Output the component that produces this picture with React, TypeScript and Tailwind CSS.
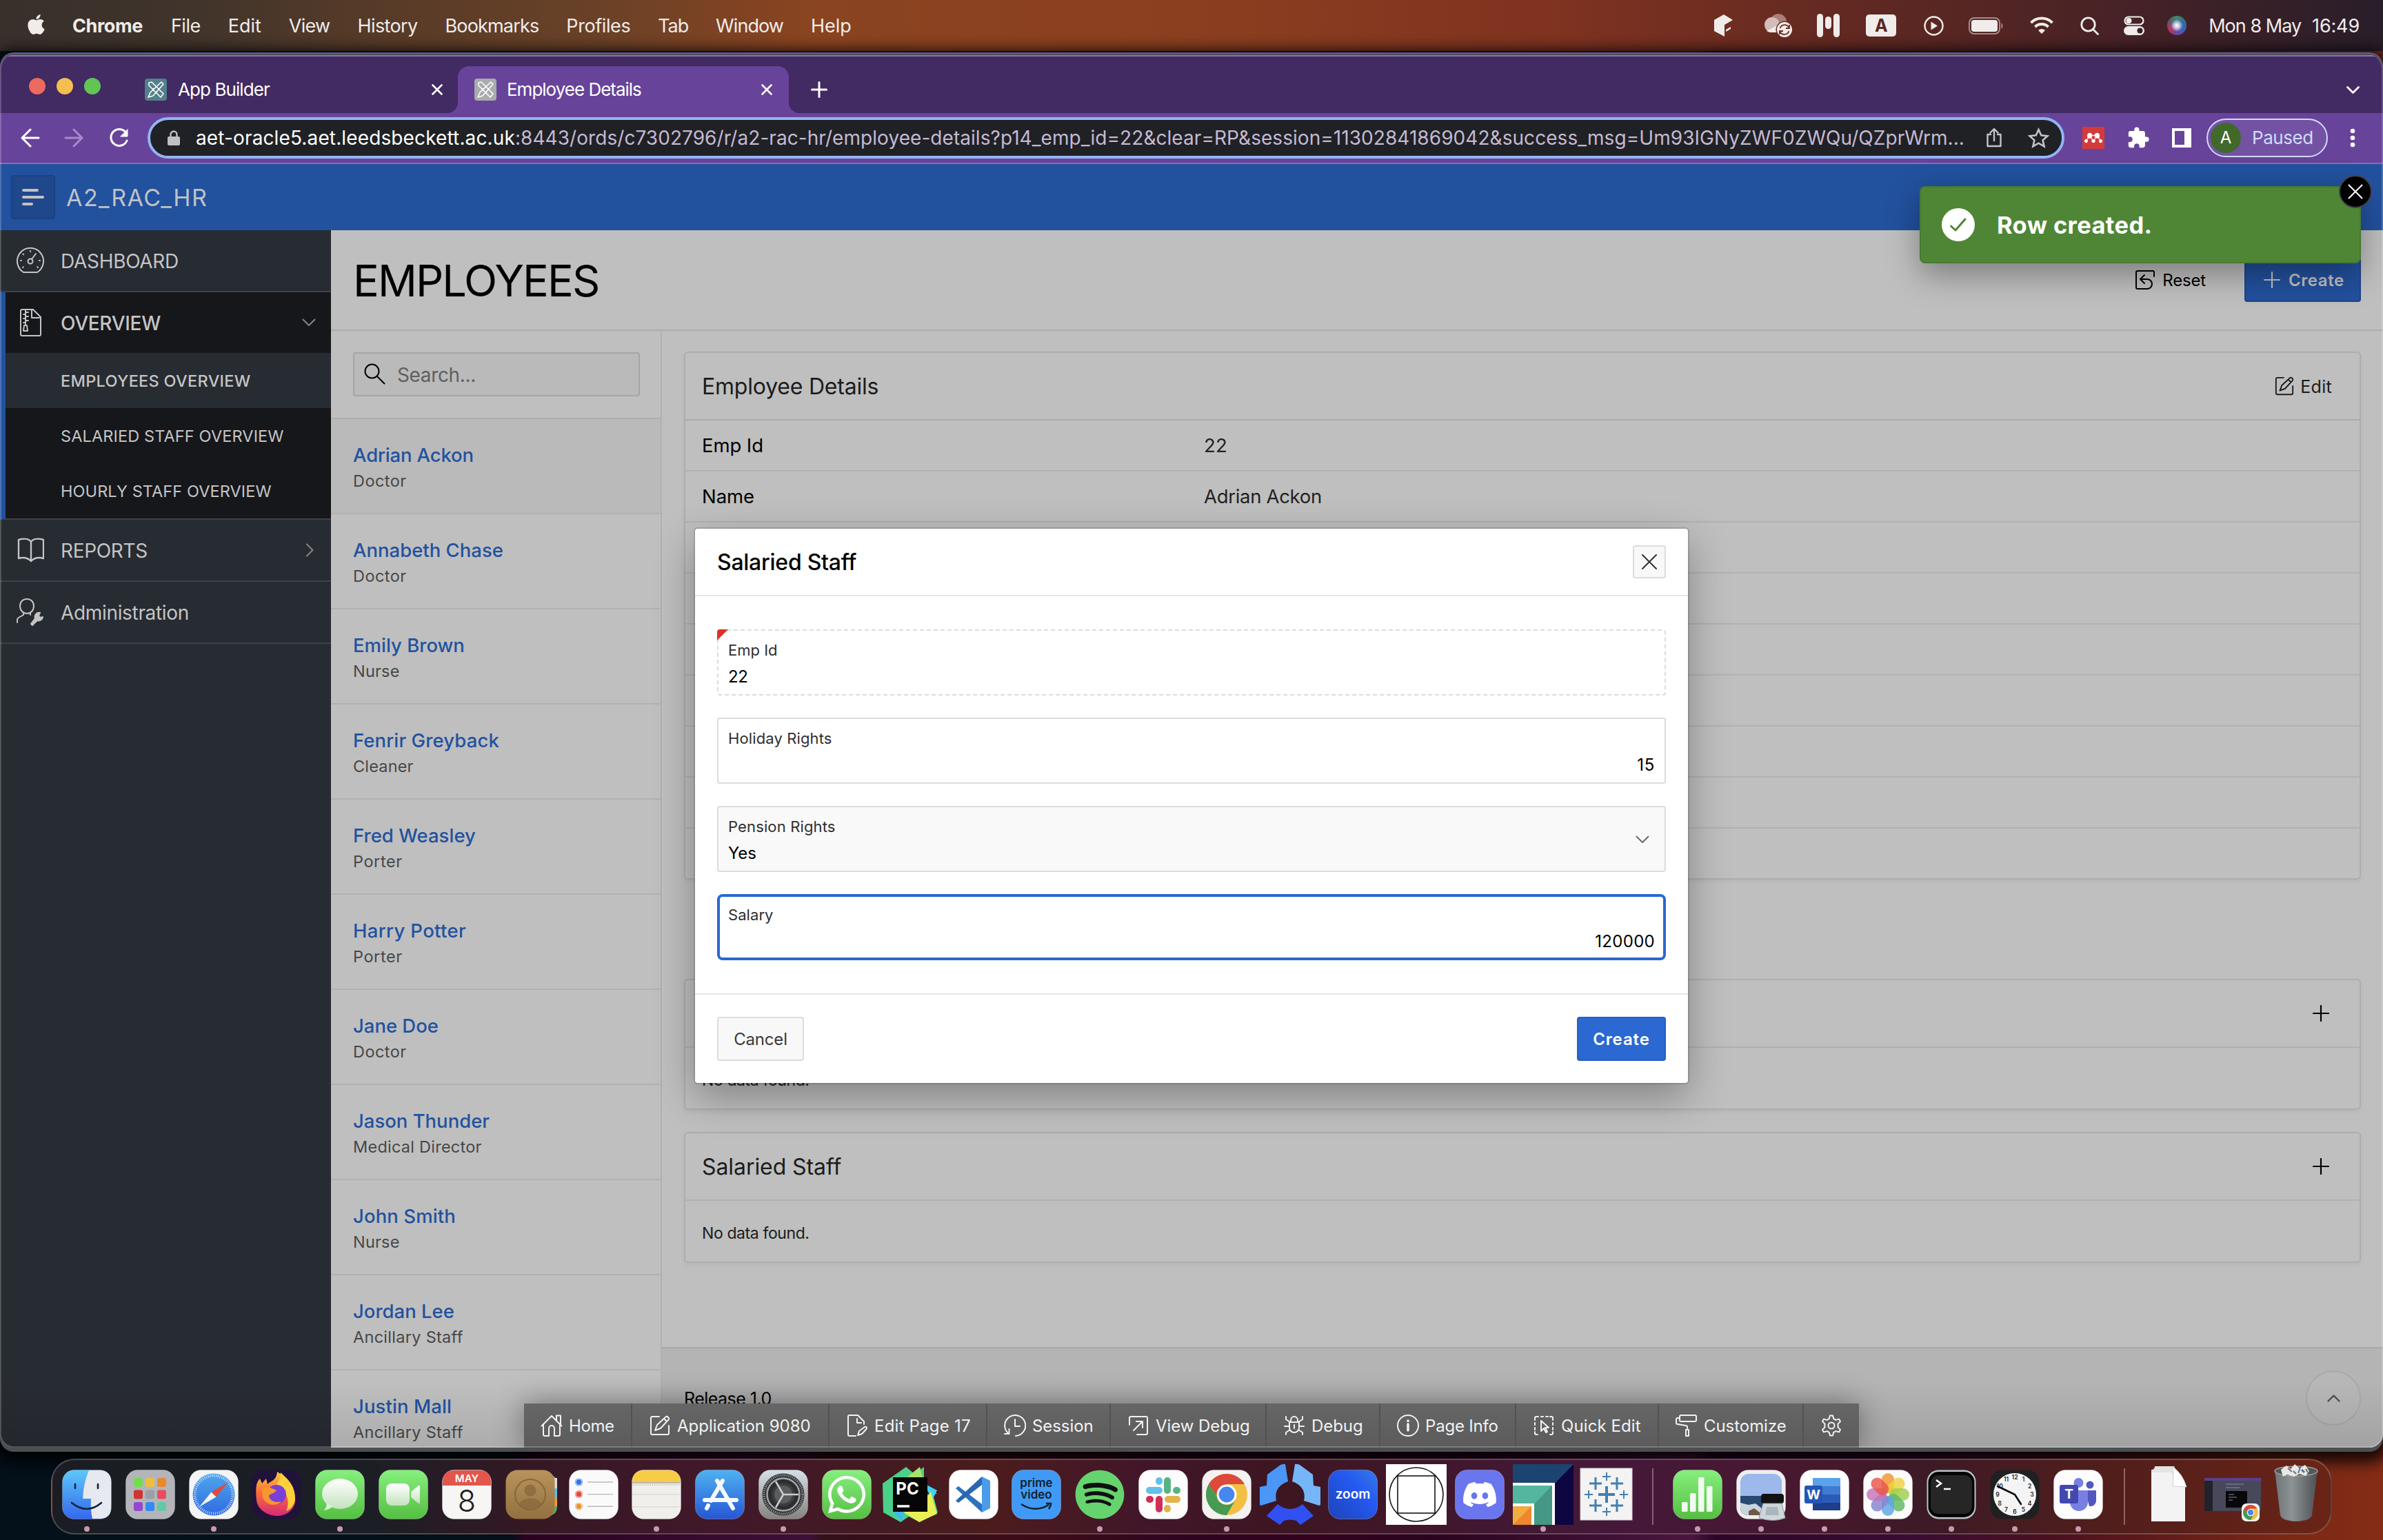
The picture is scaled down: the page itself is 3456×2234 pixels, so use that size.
import React, { useLayoutEffect, useRef } from "react";
import { FaApple, FaWhatsapp, FaSpotify, FaDiscord, FaMendeley } from "react-icons/fa";
import { MdExtension } from "react-icons/md";

/* Single-line label. When `w` is given the tracking is adjusted so the text spans that width. */
function T({ w, className = "", children }: { w?: number; className?: string; children: string }) {
  const ref = useRef<HTMLSpanElement>(null);
  useLayoutEffect(() => {
    const el = ref.current;
    if (!el || !w) return;
    el.style.letterSpacing = "0px";
    const size = parseFloat(getComputedStyle(el).fontSize);
    const natural = el.getBoundingClientRect().width;
    el.style.letterSpacing = `${(w + size * 0.07 - natural) / children.length}px`;
  }, [w, children]);
  return (
    <span ref={ref} className={`inline-block shrink-0 whitespace-pre leading-none ${className}`}>
      {children}
    </span>
  );
}

type IconProps = { className?: string; children: React.ReactNode; box?: string; sw?: number };
function Line({ className = "size-8", children, box = "0 0 32 32", sw = 2 }: IconProps) {
  return (
    <svg className={`shrink-0 ${className}`} viewBox={box} fill="none" stroke="currentColor" strokeWidth={sw} strokeLinecap="round" strokeLinejoin="round">
      {children}
    </svg>
  );
}

const EditIcon = ({ className }: { className?: string }) => (
  <Line className={className}>
    <path d="M15 3H5a2 2 0 0 0-2 2v22a2 2 0 0 0 2 2h22a2 2 0 0 0 2-2V16" />
    <path d="M9 23l3-8L24.500 3.500a2 2 0 0 1 3 0l1 1a2 2 0 0 1 0 3L17 20z M22 6l4 4" />
  </Line>
);

/* ---------- macOS menu bar ---------- */
const menus: [string, number][] = [
  ["File", 41], ["Edit", 46], ["View", 58], ["History", 85], ["Bookmarks", 134],
  ["Profiles", 91], ["Tab", 42], ["Window", 96], ["Help", 57],
];

function MenuBar() {
  return (
    <div className="flex h-[74px] shrink-0 items-center bg-[linear-gradient(90deg,#38302b_0%,#40342b_8%,#553a28_15%,#6a4127_25%,#8a4420_34%,#8c3f1f_50%,#7e3220_66%,#5e2822_79%,#472226_89%,#281e2a_100%)] text-[27px] text-[#f0ecea]">
      <FaApple className="ml-[36px] size-[33px] -translate-y-[2px]" />
      <T w={100} className="ml-[36px] font-bold">Chrome</T>
      <div className="ml-[41px] flex gap-[40px]">
        {menus.map(([m, w]) => <T key={m} w={w}>{m}</T>)}
      </div>
      <div className="ml-auto flex items-center">
        <svg className="h-[34px] w-[30px]" viewBox="0 0 30 34" fill="currentColor">
          <path d="M15 1l13 8-12 7v17L1 25V9z" /><path d="M18 23l7-4v3l-7 4z" />
        </svg>
        <svg className="ml-[42px] h-[36px] w-[44px]" viewBox="0 0 44 36">
          <circle cx="22" cy="13" r="12" fill="#a98079" /><circle cx="13" cy="17" r="11" fill="#d3bdb8" />
          <path d="M5 26l17-9 8 9-6 2H10z" fill="#f0ecea" />
          <circle cx="31" cy="24" r="12.500" fill="#6a2c22" /><circle cx="31" cy="24" r="11" fill="#f0ecea" />
          <path d="M24.500 22a7 7 0 0 1 13-1M38 17v5h-5M37.500 26a7 7 0 0 1-13 1M24 31v-5h5" fill="none" stroke="#6a2c22" strokeWidth="1.800" />
        </svg>
        <svg className="ml-[33px] h-[34px] w-[36px]" viewBox="0 0 36 34" fill="currentColor">
          <rect x="1" width="9" height="34" rx="4.500" /><rect x="13" y="4" width="9" height="18" rx="4.500" /><rect x="25" width="9" height="34" rx="4.500" />
        </svg>
        <div className="ml-[36px] flex h-8 w-11 items-center justify-center rounded-[5px] bg-[#f0ecea] text-[25px] font-bold text-[#5a2722]"><T>A</T></div>
        <svg className="ml-[40px] size-[29px]" viewBox="0 0 29 29"><circle cx="14.500" cy="14.500" r="13" fill="none" stroke="currentColor" strokeWidth="2.400" /><path d="M10.500 8.500l9.500 6-9.500 6z" fill="currentColor" /></svg>
        <svg className="ml-[36px] h-[25px] w-[52px]" viewBox="0 0 52 25"><rect x="1" y="1" width="44" height="23" rx="7" fill="none" stroke="#a58b8a" strokeWidth="2" /><rect x="4" y="4" width="38" height="17" rx="4" fill="currentColor" /><path d="M48 9a6 6 0 0 1 0 7z" fill="#a58b8a" stroke="#a58b8a" /></svg>
        <svg className="ml-[37px] h-[26px] w-[34px]" viewBox="0 0 34 26" fill="none" stroke="currentColor" strokeWidth="4"><path d="M1.500 9a22 22 0 0 1 31 0M7.500 15a13.500 13.500 0 0 1 19 0" /><path d="M17 25l-5-5a7 7 0 0 1 10 0z" fill="currentColor" stroke="none" /></svg>
        <svg className="ml-[39px] size-[27px]" viewBox="0 0 27 27" fill="none" stroke="currentColor" strokeWidth="2.800" strokeLinecap="round"><circle cx="11.500" cy="11.500" r="9.700" /><path d="M18.500 18.500l7 7" /></svg>
        <svg className="ml-[36px] h-[28px] w-[30px]" viewBox="0 0 30 28"><rect x="1.500" y="1.500" width="27" height="11" rx="5.500" fill="none" stroke="currentColor" strokeWidth="2.200" /><circle cx="7.500" cy="7" r="4" fill="currentColor" /><rect x="0" y="15" width="30" height="13" rx="6.500" fill="currentColor" /><circle cx="23.500" cy="21.500" r="4" fill="#38202a" /></svg>
        <div className="ml-[33px] size-7 rounded-full bg-[radial-gradient(circle_at_50%_50%,#fff_0%,#c9c4e8_20%,transparent_45%),conic-gradient(#3f8a6c,#2f6f9a,#3a62b8,#6b4a9a,#b8325e,#5a5a6a,#3f8a6c)]" />
        <T w={132} className="ml-[32px]">Mon 8 May</T>
        <T w={67} className="ml-[16px] mr-[34px]">16:49</T>
      </div>
    </div>
  );
}

/* ---------- Browser chrome ---------- */
const Cross = ({ className }: { className?: string }) => (
  <Line className={className} box="0 0 16 16" sw={2.600}><path d="M1.500 1.500l13 13M14.500 1.500l-13 13" /></Line>
);

function Favicon({ gray }: { gray?: boolean }) {
  return (
    <svg className="size-8 shrink-0" viewBox="0 0 32 32">
      <rect width="32" height="32" rx="4" fill={gray ? "#a9abad" : "#53808a"} />
      <g fill="none" stroke="#fff" strokeWidth="1.600" strokeLinejoin="round">
        <path d="M6 6l4-1 17 17-4 5L6 10zM27 8l-3-3L8 20l-3 7 7-2z M11 16l2-2M16 21l2-2" />
      </g>
    </svg>
  );
}

function TabStrip() {
  return (
    <div className="flex h-[82px] shrink-0 items-end bg-[#422a63] text-[26px] text-white">
      <div className="flex h-full items-center gap-4 pl-[42px] pt-[4px]">
        <div className="size-6 rounded-full bg-[#ec6a5e]" />
        <div className="size-6 rounded-full bg-[#f4bf4f]" />
        <div className="size-6 rounded-full bg-[#61c554]" />
      </div>
      <div className="ml-[64px] flex h-[68px] w-[454px] items-center">
        <Favicon />
        <T w={131} className="ml-[16px]">App Builder</T>
        <Cross className="ml-auto mr-[22px] size-4" />
      </div>
      <div className="relative flex h-[68px] w-[480px] items-center rounded-t-2xl bg-[#68439a] pl-6">
        <div className="absolute -left-4 bottom-0 size-4 bg-[radial-gradient(circle_at_0_0,transparent_16px,#68439a_16.500px)]" />
        <div className="absolute -right-4 bottom-0 size-4 bg-[radial-gradient(circle_at_100%_0,transparent_16px,#68439a_16.500px)]" />
        <Favicon gray />
        <T w={193} className="ml-[15px]">Employee Details</T>
        <Cross className="ml-auto mr-6 size-4" />
      </div>
      <div className="ml-[32px] flex h-[68px] items-center">
        <Line className="size-6" box="0 0 24 24" sw={3}><path d="M12 1.500v21M1.500 12h21" /></Line>
      </div>
      <div className="ml-auto mr-[34px] flex h-[68px] items-center">
        <Line className="h-[11px] w-[19px]" box="0 0 19 11" sw={2.800}><path d="M1.500 1.500l8 8 8-8" /></Line>
      </div>
    </div>
  );
}

function Toolbar() {
  return (
    <div className="flex h-[74px] shrink-0 items-center border-b-2 border-[#8c6ab2] bg-[#68439a] pl-[30px] text-white">
      <Line className="size-7" box="0 0 28 28" sw={3}><path d="M26 14H2.500M14 2L2 14l12 12" /></Line>
      <Line className="ml-[35px] size-7 text-[#a88bc9]" box="0 0 28 28" sw={3}><path d="M2 14h23.500M14 2l12 12-12 12" /></Line>
      <Line className="ml-[37px] size-[30px]" box="0 0 30 30" sw={3}><path d="M26 19a12 12 0 1 1-2.500-13" /><path d="M27 3v10H17z" fill="currentColor" strokeWidth="1" /></Line>
      <div className="ml-[26px] flex h-[60px] w-[2780px] items-center rounded-full border-4 border-[#92b4f3] bg-[#202124] pl-[25px] text-[28px]">
        <svg className="h-[23px] w-[18px]" viewBox="0 0 18 23"><rect y="9" width="18" height="13" rx="2" fill="#bdbfc3" /><path d="M4.500 10V6a4.500 4.500 0 0 1 9 0v4" fill="none" stroke="#bdbfc3" strokeWidth="2.400" /></svg>
        <T w={461} className="ml-[23px]">aet-oracle5.aet.leedsbeckett.ac.uk</T>
        <T w={2100} className="text-[#c4b9d4]">:8443/ords/c7302796/r/a2-rac-hr/employee-details?p14_emp_id=22&clear=RP&session=11302841869042&success_msg=Um93IGNyZWF0ZWQu/QZprWrm...</T>
        <Line className="ml-[31px] h-[30px] w-[24px] text-[#c4c4c8]" box="0 0 24 30" sw={2.400}><path d="M7 10H2.500v17h19V10H17M12 19V3M6.500 7.500L12 2l5.500 5.500" /></Line>
        <Line className="ml-[37px] size-[31px] text-[#c4c4c8]" box="0 0 31 31" sw={2.600}><path d="M15.500 3l3.800 8.400 9.200.9-6.900 6.100 2 9-8.100-4.700-8.100 4.700 2-9-6.900-6.100 9.200-.9z" strokeLinejoin="miter" /></Line>
      </div>
      <div className="ml-[26px] flex size-8 items-center justify-center bg-[#d53a3a]"><FaMendeley className="size-[26px]" /></div>
      <MdExtension className="ml-[32px] size-[34px]" />
      <svg className="ml-[32px] size-7" viewBox="0 0 28 28"><path d="M0 0h28v28H0zM4 4v20h14V4z" fill="#fff" fillRule="evenodd" /></svg>
      <div className="ml-[22px] flex h-14 w-[176px] items-center rounded-full border-2 border-[#cfdcfb] bg-[#7352a4] pl-1 text-[#cfdcfb]">
        <div className="flex size-11 items-center justify-center rounded-full bg-[#41692a] text-[24px] text-white"><T>A</T></div>
        <T w={87} className="ml-[16px] text-[26px]">Paused</T>
      </div>
      <svg className="ml-[32px] h-[28px] w-2" viewBox="0 0 8 28" fill="#fff"><circle cx="4" cy="4" r="3.300" /><circle cx="4" cy="14" r="3.300" /><circle cx="4" cy="24" r="3.300" /></svg>
    </div>
  );
}

/* ---------- Application ---------- */
function Sidebar() {
  const row = "flex h-[90px] items-center border-b-2 border-[#3c4147] pl-6 text-[28px]";
  return (
    <aside className="w-[480px] shrink-0 bg-[#272b32] text-[#c4c4c4]">
      <div className={row}>
        <Line className="size-10" box="0 0 40 40">
          <path d="M10 37a19 19 0 1 1 20 0z" /><circle cx="20" cy="21" r="3.500" /><path d="M22 18l6-8M20 6v1M9.500 10.500l.7.700M6 20h1M33 20h1M9 30l.7-.700M31 30l-.7-.700" />
        </Line>
        <T w={169} className="ml-6">DASHBOARD</T>
      </div>
      <div className="border-b-2 border-l-8 border-b-[#3c4147] border-l-[#22529f] bg-[#16171b]">
        <div className="flex h-[88px] items-center pl-4 text-[28px]">
          <Line className="size-10" box="0 0 40 40">
            <path d="M6 3a2 2 0 0 1 2-2h16l11 11v25a2 2 0 0 1-2 2H8a2 2 0 0 1-2-2zM22 2v11h11" /><path d="M13 2v20M13 5h4M10 8h3M13 11h4M10 14h3M13 17h4M10 20h3M11 24h4l1 8h-6z" />
          </Line>
          <T w={143} className="ml-6 font-medium">OVERVIEW</T>
          <Line className="ml-auto mr-[22px] h-3 w-5 text-[#85868a]" box="0 0 20 12"><path d="M1.500 1.500L10 10l8.500-8.500" /></Line>
        </div>
        <div className="flex h-20 items-center bg-[#272b32] pl-20 text-[23.500px] font-medium"><T w={274}>EMPLOYEES OVERVIEW</T></div>
        <div className="flex h-20 items-center pl-20 text-[23.500px]"><T w={322}>SALARIED STAFF OVERVIEW</T></div>
        <div className="flex h-20 items-center pl-20 text-[23.500px]"><T w={304}>HOURLY STAFF OVERVIEW</T></div>
      </div>
      <div className={row}>
        <Line className="size-10" box="0 0 40 40" sw={2.400}><path d="M21 8c-3-5-11-5-18-3v27c7-2 13-1 18 4 5-5 11-6 18-4V5c-7-2-15-2-18 3v28" /></Line>
        <T w={124} className="ml-6">REPORTS</T>
        <Line className="ml-auto mr-[25px] h-5 w-3 text-[#85868a]" box="0 0 12 20"><path d="M2 1.500L10.500 10 2 18.500" /></Line>
      </div>
      <div className={row}>
        <Line className="size-10" box="0 0 40 40">
          <path d="M15 1c6 0 10 4 10 10s-4 11-10 11S5 17 5 11 9 1 15 1zM10 21v3l-7 4a4 4 0 0 0-2 4v3M20 21v3" /><path d="M38 27a6 6 0 0 1-8 5l-7 7-2-2 6-8a6 6 0 0 1 7-8l-2 4 2 3z" fill="currentColor" />
        </Line>
        <T w={184} className="ml-6">Administration</T>
      </div>
    </aside>
  );
}

const people: [string, number, string, number][] = [
  ["Adrian Ackon", 173, "Doctor", 76],
  ["Annabeth Chase", 216, "Doctor", 76],
  ["Emily Brown", 160, "Nurse", 66],
  ["Fenrir Greyback", 210, "Cleaner", 86],
  ["Fred Weasley", 176, "Porter", 70],
  ["Harry Potter", 162, "Porter", 70],
  ["Jane Doe", 122, "Doctor", 76],
  ["Jason Thunder", 196, "Medical Director", 185],
  ["John Smith", 147, "Nurse", 66],
  ["Jordan Lee", 145, "Ancillary Staff", 158],
  ["Justin Mall", 141, "Ancillary Staff", 158],
];

function PeopleList() {
  return (
    <div className="w-[480px] shrink-0 border-r-2 border-[#b1b1b1]">
      <div className="flex h-[128px] items-center border-b-2 border-[#aeaeae] pl-8">
        <div className="flex h-16 w-[416px] items-center rounded border-2 border-[#a5a5a5] bg-[#bababa] pl-[13px] text-[28px] text-[#5f5f5f]">
          <Line className="size-8 text-black"><circle cx="12.500" cy="11.500" r="10" /><path d="M20 19l10.500 10.500" /></Line>
          <T w={112} className="ml-[17px]">Search...</T>
        </div>
      </div>
      {people.map(([name, w, job, jw], i) => (
        <div key={name} className={`flex h-[138px] flex-col border-b-2 border-[#b1b1b1] pl-8 pt-[33px] ${i === 0 ? "bg-[#bababa]" : ""}`}>
          <div className="flex h-[38px] items-center text-[27.500px] font-medium text-[#22529f]"><T w={w}>{name}</T></div>
          <div className="flex h-9 items-center text-[23.500px] text-[#474747]"><T w={jw}>{job}</T></div>
        </div>
      ))}
    </div>
  );
}

const PlusIcon = ({ className }: { className: string }) => (
  <Line className={className} box="0 0 24 24" sw={2.200}><path d="M12 1v22M1 12h22" /></Line>
);

function DataCard({ title, w }: { title: string; w: number }) {
  return (
    <div className="h-[190px] rounded-md border-2 border-[#adadad] shadow-[0_3px_6px_rgba(0,0,0,0.05)]">
      <div className="flex h-[98px] items-center border-b-2 border-[#b0b0b0] pl-6 pr-11 text-[32px] text-[#1c1c1c]">
        <T w={w}>{title}</T>
        <PlusIcon className="ml-auto size-6 text-black" />
      </div>
      <div className="flex h-[92px] items-center pl-6 text-[23px] text-[#1c1c1c]"><T w={154}>No data found.</T></div>
    </div>
  );
}

function Content() {
  return (
    <main className="flex min-w-0 grow flex-col">
      <div className="grow px-8 pt-[30px]">
        <div className="h-[766px] overflow-hidden rounded-md border-2 border-[#adadad] shadow-[0_3px_6px_rgba(0,0,0,0.05)]">
          <div className="flex h-[98px] items-center border-b-2 border-[#adadad] pl-6 pr-10 text-[32px] text-[#1c1c1c]">
            <T w={254}>Employee Details</T>
            <EditIcon className="ml-auto size-[30px]" />
            <T w={44} className="ml-2 text-[25px]">Edit</T>
          </div>
          <div className="flex h-[74px] items-center border-b-2 border-[#b1b1b1] pl-6 text-[27.500px]">
            <div className="flex w-[728px] text-black"><T w={87}>Emp Id</T></div><T w={32} className="text-[#222]">22</T>
          </div>
          <div className="flex h-[74px] items-center border-b-2 border-[#b1b1b1] pl-6 text-[27.500px]">
            <div className="flex w-[728px] text-black"><T w={74}>Name</T></div><T w={169} className="text-[#222]">Adrian Ackon</T>
          </div>
          {[0, 1, 2, 3, 4, 5].map((i) => <div key={i} className="h-[74px] border-b-2 border-[#b1b1b1]" />)}
        </div>
        <div className="mt-[144px] flex flex-col gap-8">
          <DataCard title="Hourly Staff" w={170} />
          <DataCard title="Salaried Staff" w={200} />
        </div>
      </div>
      <footer className="flex h-[146px] items-center border-t-2 border-[#a9a9a9] bg-[#b4b4b4] px-8 text-[25px] text-black">
        <T w={125}>Release 1.0</T>
        <div className="ml-auto flex size-20 items-center justify-center rounded-full border-2 border-[#a9a9a9] bg-[#b7b7b7]">
          <Line className="h-[11px] w-[19px] text-[#4d4d4d]" box="0 0 19 11" sw={2.400}><path d="M1.500 9.500l8-8 8 8" /></Line>
        </div>
      </footer>
    </main>
  );
}

function Field({ label, w, value, vw, kind }: { label: string; w: number; value: string; vw: number; kind: "dashed" | "number" | "select" | "focus" }) {
  const look = {
    dashed: "border-2 border-dashed border-[#dcdcdc] rounded px-[14px]",
    number: "border-2 border-[#dcdcdc] rounded px-[14px]",
    select: "border-2 border-[#dcdcdc] rounded bg-[#f9f9f9] px-[14px]",
    focus: "border-4 border-[#2b68d0] rounded-lg px-3",
  }[kind];
  const right = kind === "number" || kind === "focus";
  return (
    <div className={`relative flex h-24 flex-col justify-center ${look}`}>
      {kind === "dashed" && <div className="absolute -left-0.5 -top-0.5 size-4 rounded-tl bg-[#dc3222] [clip-path:polygon(0_0,100%_0,0_100%)]" />}
      <div className="flex h-[39px] items-center text-[22px] text-[#2f2f2f]"><T w={w}>{label}</T></div>
      <div className={`flex h-[38px] items-center text-[24px] text-black ${right ? "justify-end" : ""}`}><T w={vw}>{value}</T></div>
      {kind === "select" && <Line className="absolute right-[22px] top-[41px] h-3 w-5 text-[#6a6a6a]" box="0 0 20 12"><path d="M1.500 1.500L10 10l8.500-8.500" /></Line>}
    </div>
  );
}

function Dialog() {
  return (
    <div className="absolute left-[1008px] top-[687px] w-[1440px] rounded bg-white shadow-[0_0_0_2px_rgba(0,0,0,0.12),0_20px_60px_rgba(0,0,0,0.32)] [&_span]:translate-y-px">
      <div className="flex h-[98px] items-center justify-between border-b-2 border-[#e6e6e6] px-8">
        <T w={200} className="text-[32px] font-medium text-black">Salaried Staff</T>
        <div className="flex size-12 items-center justify-center rounded border-2 border-[#dcdcdc] bg-[#f8f8f8] text-[#333]">
          <Line className="size-[22px]" box="0 0 22 22"><path d="M1 1l20 20M21 1L1 21" /></Line>
        </div>
      </div>
      <div className="flex flex-col gap-8 px-8 py-12">
        <Field label="Emp Id" w={70} value="22" vw={27} kind="dashed" />
        <Field label="Holiday Rights" w={149} value="15" vw={24} kind="number" />
        <Field label="Pension Rights" w={154} value="Yes" vw={39} kind="select" />
        <Field label="Salary" w={64} value="120000" vw={85} kind="focus" />
      </div>
      <div className="flex h-[130px] items-center justify-between border-t-2 border-[#e6e6e6] px-8 text-[24px]">
        <div className="flex h-16 w-[126px] items-center justify-center rounded border-2 border-[#dcdcdc] bg-[#f8f8f8] text-[#3a3a3a]"><T w={76}>Cancel</T></div>
        <div className="flex h-16 w-[129px] items-center justify-center rounded border-2 border-[#275fc2] bg-[#2c68d2] font-semibold text-white"><T w={81}>Create</T></div>
      </div>
    </div>
  );
}

function Toast() {
  return (
    <div className="absolute right-8 top-[190px] flex h-28 w-[640px] items-center rounded-lg border-2 border-[#457a30] bg-[#4f8636] pl-[30px] text-white shadow-[0_16px_48px_rgba(0,0,0,0.35)] [&_span]:translate-y-px">
      <svg className="size-12" viewBox="0 0 48 48"><circle cx="24" cy="24" r="24" fill="#fff" /><path d="M13.500 26l6.500 6 14-16" fill="none" stroke="#4f8636" strokeWidth="3" strokeLinecap="round" strokeLinejoin="round" /></svg>
      <T w={223} className="ml-8 text-[34.500px] font-bold">Row created.</T>
      <div className="absolute -right-[18px] -top-[18px] flex size-12 items-center justify-center rounded-full border-2 border-[#444] bg-black">
        <Line className="size-[22px]" box="0 0 22 22"><path d="M1.500 1.500l19 19M20.500 1.500l-19 19" /></Line>
      </div>
    </div>
  );
}

const tools: { name: string; w: number; cell: string; icon: React.ReactNode }[] = [
  { name: "Home", w: 64, cell: "w-[157px]", icon: <path d="M1.500 16.500L16 2l14.500 14.500M4 14.500V29a2 2 0 0 0 2 2h6V20a4 4 0 0 1 8 0v11h6a2 2 0 0 0 2-2V14.500M23 8.500V1.500h6v12" /> },
  { name: "Application 9080", w: 192, cell: "w-[286px]", icon: <><path d="M15 3H5a2 2 0 0 0-2 2v22a2 2 0 0 0 2 2h22a2 2 0 0 0 2-2V16" /><path d="M9 23l3-8L24.500 3.500a2 2 0 0 1 3 0l1 1a2 2 0 0 1 0 3L17 20z M22 6l4 4" /></> },
  { name: "Edit Page 17", w: 138, cell: "w-[229px]", icon: <><path d="M14 31H5a2 2 0 0 1-2-2V3a2 2 0 0 1 2-2h12l9 9v4M16 6v6h6" /><path d="M17 30l2-6 8-6c2-1 4 1 2.500 3L23 28z" /></> },
  { name: "Session", w: 87, cell: "w-[179px]", icon: <><path d="M6 27A15 15 0 1 1 17 31M16 7v10h7" /><path d="M7.500 21v7h-6.500" /></> },
  { name: "View Debug", w: 135, cell: "w-[226px]", icon: <path d="M3 15V5a2 2 0 0 1 2-2h22a2 2 0 0 1 2 2v22a2 2 0 0 1-2 2H14M9 23l13-13M13 10h9v9" /> },
  { name: "Debug", w: 73, cell: "w-[165px]", icon: <path d="M9 11h14v8a7 7 0 0 1-14 0zM11 11V8a5 5 0 0 1 10 0v3M4 3v4l6 4M28 3v4l-6 4M2 17h7M23 17h7M4 29v-3l6-4M28 29v-3l-6-4M16 15v5" /> },
  { name: "Page Info", w: 104, cell: "w-[197px]", icon: <><circle cx="16" cy="16" r="15" /><path d="M16 14v9M16 9v.5" strokeWidth="3.500" /></> },
  { name: "Quick Edit", w: 114, cell: "w-[207px]", icon: <><path d="M3 8V5a2 2 0 0 1 2-2h3M12 3h3M19 3h3M25 3h2a2 2 0 0 1 2 2v3M3 12v3M3 19v3M29 12v3M29 19v3M3 25v2a2 2 0 0 0 2 2h2M29 25v2a2 2 0 0 1-2 2h-2" /><path d="M12 9v15l4-4 3 6 2-1-3-6h5z" /></> },
  { name: "Customize", w: 118, cell: "w-[210px]", icon: <path d="M8 1h20a2 2 0 0 1 2 2v5a2 2 0 0 1-2 2H8a2 2 0 0 1-2-2V3a2 2 0 0 1 2-2zM6 5H3a2 2 0 0 0-2 2v5a2 2 0 0 0 2 2l12 2a2 2 0 0 1 2 2v2M15 22h4v9h-4z" /> },
];

function DevToolbar() {
  return (
    <div className="absolute bottom-0 left-[760px] flex h-16 bg-gradient-to-b from-[#666] to-[#5b5b5b] text-[24px] text-[#f2f2f2] shadow-[0_0_44px_rgba(0,0,0,0.4)] [&_span]:translate-y-px">
      {tools.map((t) => (
        <div key={t.name} className={`flex h-full items-center border-r-2 border-[#525252] pl-6 ${t.cell}`}>
          <Line>{t.icon}</Line>
          <T w={t.w} className="ml-[9px]">{t.name}</T>
        </div>
      ))}
      <div className="flex w-20 items-center justify-center">
        <Line><circle cx="16" cy="16" r="4.500" /><path d="M14 1.500h4l1.200 4.600 3.200 1.800 4.600-1.300 2 3.500-3.400 3.300v5.200l3.400 3.300-2 3.500-4.600-1.300-3.200 1.800L18 30.500h-4l-1.200-4.600-3.200-1.800L5 25.400l-2-3.500 3.400-3.300v-5.200L3 10.100l2-3.500 4.600 1.300 3.200-1.800z" /></Line>
      </div>
    </div>
  );
}

function BrowserWindow() {
  return (
    <div className="relative flex h-[2020px] flex-col overflow-hidden rounded-[20px] bg-[#bfbfbf]">
      <div className="h-0.5 shrink-0 bg-[#8c6fae]" />
      <TabStrip />
      <Toolbar />
      <div className="flex h-24 shrink-0 items-center bg-[#22519e] pl-4 [&_span]:translate-y-px">
        <div className="flex size-16 flex-col justify-center gap-[6px] rounded border-2 border-[#1d4182] bg-[#1f478c] pl-[14px]">
          <div className="h-1 w-6 rounded-sm bg-[#c2c2c2]" /><div className="h-1 w-8 rounded-sm bg-[#c2c2c2]" /><div className="h-1 w-4 rounded-sm bg-[#c2c2c2]" />
        </div>
        <T w={203} className="ml-4 text-[34px] text-[#bfc2c6]">A2_RAC_HR</T>
      </div>
      <div className="flex min-h-0 grow [&_span]:translate-y-px">
        <Sidebar />
        <div className="flex min-w-0 grow flex-col">
          <div className="flex h-[146px] shrink-0 items-center border-b-2 border-[#acacac] pl-8 pr-8">
            <T w={352} className="text-[63px] text-black">EMPLOYEES</T>
            <Line className="ml-auto size-8 text-black"><path d="M29 11V5a2 2 0 0 0-2-2H5a2 2 0 0 0-2 2v22a2 2 0 0 0 2 2h14a7 7 0 0 0 0-14H10M15 9l-6 6 6 6" /></Line>
            <T w={61} className="ml-[9px] text-[24px] text-black">Reset</T>
            <div className="ml-[56px] flex h-16 w-[169px] items-center rounded border-2 border-[#1d468c] bg-[#22509d] pl-[26px] text-[24px] font-semibold text-[#c2c2c2]">
              <PlusIcon className="size-6" />
              <T w={79} className="ml-[12px]">Create</T>
            </div>
          </div>
          <div className="flex min-h-0 grow">
            <PeopleList />
            <Content />
          </div>
        </div>
      </div>
      <div className="pointer-events-none absolute inset-x-0 bottom-0 h-24 bg-gradient-to-b from-transparent to-black/10" />
      <DevToolbar />
      <Dialog />
      <Toast />
      <div className="pointer-events-none absolute inset-0 rounded-[20px] border-2 border-t-0 border-white/20" />
    </div>
  );
}

/* ---------- Dock ---------- */
type Art = { id: string; dot?: boolean; art: React.ReactNode };
const Tile = ({ fill, children }: { fill: string; children?: React.ReactNode }) => (
  <>
    <rect x="10.500" y="8.500" width="71" height="71" rx="17" fill={fill} stroke="rgba(255,255,255,0.25)" strokeWidth="1" />
    {children}
  </>
);
const Glyph = ({ x, y, size, weight = 700, fill, children }: { x: number; y: number; size: number; weight?: number; fill: string; children: string }) => (
  <text x={x} y={y} fontSize={size} fontWeight={weight} fill={fill} textAnchor="middle" fontFamily="Inter, sans-serif">{children}</text>
);
const ChromeMark = ({ cx, cy, r }: { cx: number; cy: number; r: number }) => (
  <g transform={`translate(${cx} ${cy}) scale(${r / 10})`}>
    <circle r="10" fill="#f3bf42" />
    <path d="M-8.660-5A10 10 0 0 1 8.660-5H0A5 5 0 0 0-4.330-2.500z" fill="#dc4a3c" />
    <path d="M-8.660-5A10 10 0 0 0 0 10L4.330 2.500A5 5 0 0 1-4.330 2.500z" fill="#459a54" />
    <path d="M-8.660-5L-4.330 2.500 0 0V-5z" fill="#459a54" /><path d="M-8.660-5H0L-4.330 1z" fill="#dc4a3c" />
    <circle r="4.800" fill="#fff" /><circle r="3.800" fill="#4687ee" />
  </g>
);

const appsLeft: Art[] = [
  { id: "finder", dot: true, art: <Tile fill="url(#finder)"><path d="M49 9h16q16 0 16 17v37q0 16-16 16H54q-3-12-2-29H40Q41 27 49 9z" fill="#e6e9f0" /><path d="M29 29v6M62 29v6M24 56q22 18 43 0" stroke="#16233a" strokeWidth="2.600" fill="none" strokeLinecap="round" /></Tile> },
  { id: "launchpad", art: <Tile fill="#b3b5ba">{["#73dd50", "#f2bd3c", "#e78a30", "#d0342c", "#9aa0a6", "#ea4c5e", "#9448cf", "#2f8cf5", "#62c9a4"].map((c, i) => <rect key={c} x={22 + (i % 3) * 17} y={20 + Math.floor(i / 3) * 17.500} width="13" height="13" rx="3" fill={c} />)}</Tile> },
  { id: "safari", dot: true, art: <Tile fill="#f4f4f4"><circle cx="46" cy="44" r="30.500" fill="url(#safari)" /><circle cx="46" cy="44" r="27.500" fill="none" stroke="#fff" strokeWidth="4" strokeDasharray="0.900 1.980" opacity="0.850" /><path d="M67 26L49.500 47.500 42.500 40.500z" fill="#e2493c" /><path d="M25 62l17.500-21.500 7 7z" fill="#f3f3f3" /></Tile> },
  { id: "firefox", art: <><rect x="10.500" y="8.500" width="71" height="71" rx="17" fill="#20123a" /><path d="M17 30c1-4 3-7 5-9l3 7 6-7 2 8c5-5 13-5 14-18 8 5 11 9 13 15l5 4c4 6 9 14 8 25-2 12-13 20-26 20S18 66 17 52c-1-8-1-16 0-22z" fill="url(#fox)" /><path d="M46 29c4-5 5-9 6-17 9 9 22 18 21 40-2 8-7 14-13 16 6-12 2-30-14-39z" fill="#ffcf3c" /><circle cx="46" cy="44" r="14" fill="#7a3fd8" /><path d="M25 35c5 0 7-3 12-1l9 4c-3 5-9 4-11 8 1 7 9 11 18 8-6 8-22 6-27-5z" fill="#f8962f" /></> },
  { id: "messages", dot: true, art: <Tile fill="url(#green)"><ellipse cx="46" cy="43" rx="26" ry="22" fill="url(#silver)" /><path d="M26 56q2 7-4 11 9-1 14-6z" fill="#d5f2d0" /></Tile> },
  { id: "facetime", art: <Tile fill="url(#green)"><rect x="21" y="28" width="34" height="32" rx="8" fill="url(#silver)" /><path d="M57 40l11-9q2-1 2 2v22q0 3-2 2l-11-9z" fill="url(#silver)" /></Tile> },
  { id: "calendar", art: <Tile fill="#f7f6f4"><path d="M11 31V26q0-17 17-17h36q17 0 17 17v5z" fill="#e2564b" /><Glyph x={46} y={25.500} size={15} weight={600} fill="#fff">MAY</Glyph><Glyph x={46} y={69} size={43} weight={300} fill="#222">8</Glyph></Tile> },
  { id: "contacts", art: <><path d="M70 14q15 2 15 14v34q0 9-8 12z" fill="#58b05f" /><path d="M80 20h5v17h-5z" fill="#d9d9d9" /><path d="M80 35h5v14h-5z" fill="#62b8ee" /><path d="M80 49h5v12h-5z" fill="#f09a36" /><rect x="10.500" y="8.500" width="71" height="71" rx="17" fill="url(#tan)" /><g fill="#8c6a3c" stroke="#8a6738"><circle cx="46" cy="44" r="22" fill="none" strokeWidth="2" /><circle cx="46" cy="38" r="8" opacity="0.800" /><path d="M30 58q5-8 16-8t16 8q-6 8-16 8t-16-8z" opacity="0.800" /></g></> },
  { id: "reminders", art: <Tile fill="#fafafa">{["#2f74ea", "#e5483d", "#e89433"].map((c, i) => <g key={c}><circle cx="24.500" cy={26 + i * 17.600} r="5.500" fill={c} /><circle cx="24.500" cy={26 + i * 17.600} r="4.500" fill="none" stroke="#fff" strokeWidth="1" /><path d={`M37 ${26 + i * 17.600}h37`} stroke="#b9b9bd" strokeWidth="1.400" /></g>)}</Tile> },
  { id: "notes", dot: true, art: <Tile fill="#f0efeb"><path d="M11 26q0-17 17-17h36q17 0 17 17H11z" fill="#f7cd47" /><path d="M11 27h70" stroke="#a9a49a" strokeWidth="1.500" /><path d="M12 30h68" stroke="#bcb8ae" strokeWidth="2" strokeDasharray="1 1.800" /><path d="M11 44h70M11 62h70" stroke="#d6d4cf" strokeWidth="1.200" /></Tile> },
  { id: "appstore", art: <Tile fill="url(#store)"><g stroke="#f5f9ff" strokeWidth="6" strokeLinecap="round"><path d="M50 24L33 53M42 24l23 40M24 52h46M29 60l-2 4" /></g></Tile> },
  { id: "settings", dot: true, art: <Tile fill="url(#grey)"><circle cx="46" cy="44" r="30.500" fill="#2c2d2f" /><circle cx="46" cy="44" r="28" fill="none" stroke="#8d8f92" strokeWidth="3.500" strokeDasharray="1.500 1.400" /><circle cx="46" cy="44" r="23.500" fill="none" stroke="#a5a8aa" strokeWidth="2.500" /><circle cx="46" cy="44" r="15" fill="#5a5c5e" stroke="#3c3d3f" strokeWidth="4" /><path d="M46 44h22M46 44L35 25M46 44L35 63" stroke="#c9ccce" strokeWidth="2.600" /></Tile> },
  { id: "whatsapp", art: <Tile fill="url(#green)"><FaWhatsapp x="15" y="13" size={62} color="#fff" /></Tile> },
  { id: "pycharm", art: <><path d="M6 28L40 4l12 10L66 4v40l20-1-8-3 8 30-26 14-16-8-12 8L7 70z" fill="#4bd08b" /><path d="M66 28l19 10-7 14z" fill="#3fd2f5" /><path d="M60 4L40 20l26 8z" fill="#a7e36a" /><path d="M30 66h26l20-26 9 32-26 12z" fill="#e9f055" /><path d="M20 68h18l-4 16z" fill="#3fb9e8" /><rect x="21" y="19" width="50" height="50" fill="#060606" /><Glyph x={42} y={44} size={24} fill="#fff">PC</Glyph><path d="M27 61h18" stroke="#fff" strokeWidth="3.500" /></> },
  { id: "vscode", art: <Tile fill="#fff"><path d="M20 35l4-3 34 26v12z" fill="#2d72be" /><path d="M20 53l4 3 34-26V18z" fill="#2968ae" /><path d="M58 18l12 6v40l-12 6z" fill="#4a9be8" /></Tile> },
  { id: "prime", art: <Tile fill="#3f9af7"><Glyph x={46} y={33} size={17} weight={600} fill="#12202e">prime</Glyph><Glyph x={46} y={50} size={17} weight={600} fill="#12202e">video</Glyph><path d="M24 58q20 13 40 1M60 57h7q0 4-3 8" stroke="#12202e" strokeWidth="2.600" fill="none" /></Tile> },
  { id: "spotify", dot: true, art: <><circle cx="46" cy="44" r="33" fill="#101010" /><FaSpotify x="9.500" y="7.500" size={73} color="#65d46e" /></> },
  { id: "slack", art: <Tile fill="#fdfdfd"><g strokeWidth="10" strokeLinecap="round"><path d="M26 38h14" stroke="#61c1e8" /><path d="M40 24v1" stroke="#61c1e8" /><path d="M52 24v14" stroke="#58b384" /><path d="M66 38h-1" stroke="#58b384" /><path d="M66 51H53" stroke="#e3b34a" /><path d="M52 64v1" stroke="#e3b34a" /><path d="M40 51v14" stroke="#cf2e58" /><path d="M26 51h1" stroke="#cf2e58" /></g></Tile> },
  { id: "chrome", dot: true, art: <Tile fill="#f3f2f0"><ChromeMark cx={46} cy={44} r={30} /></Tile> },
  { id: "ring", art: <><path d="M32 1q5-2 7-1 2 13 4 25-12 4-16 13-3 7-1 15L4 60q-2 0-2-2V33l10-2 1-16z" fill="#4a97f8" /><path d="M60 1q-5-2-7-1-2 13-4 25 12 4 16 13 3 7 1 15l22 7q2 0 2-2V33l-10-2-1-16z" fill="#74b6f8" /><path d="M28 58q8 7 18 7t18-7l16 17-19 13-6-6q-9-3-18 0l-6 6-19-13z" fill="#3050f2" /></> },
  { id: "zoom", art: <Tile fill="url(#zoomb)"><Glyph x={46} y={50} size={19} weight={600} fill="#fff">zoom</Glyph></Tile> },
  { id: "squircle", art: <><rect x="2" y="0" width="88" height="88" fill="#fff" /><circle cx="46" cy="44" r="39" fill="none" stroke="#161616" strokeWidth="1.600" /><rect x="19" y="17" width="54" height="54" fill="none" stroke="#161616" strokeWidth="1.600" /></> },
  { id: "discord", art: <Tile fill="#6a76ee"><FaDiscord x="20" y="18" size={52} color="#fff" /></Tile> },
  { id: "frames", dot: true, art: <><rect x="2" width="88" height="88" fill="#0d0640" /><path d="M2 0h88L64 27H2z" fill="#1c4470" /><path d="M2 27h61v61H2z" fill="#fff" /><path d="M2 31h57v57H2z" fill="#449884" /><path d="M2 31h57L33 58H2z" fill="#53b69d" /><path d="M2 57h31v31H2z" fill="#fff" /><path d="M2 61h27v27H2z" fill="#ee8730" /><path d="M2 61h27L2 88z" fill="#f2ac3f" /></> },
  { id: "tableau", art: <><rect x="8" y="6" width="75" height="75" fill="#f3f3f3" stroke="#cfcfcf" /><g stroke="#447fae" strokeWidth="3"><path d="M46 32v24M34 44h24" strokeWidth="4" /><path d="M30 19v18M21 28h18M61 19v18M52 28h18M30 51v18M21 60h18M61 51v18M52 60h18" /><path d="M46 12v12M40 18h12M46 63v12M40 69h12M20 38v12M14 44h12M71 38v12M65 44h12" strokeWidth="2" /></g></> },
];

const appsRight: Art[] = [
  { id: "numbers", dot: true, art: <Tile fill="url(#green)"><g fill="#f1fbef"><rect x="23" y="55" width="8.500" height="14" rx="1.500" /><rect x="35" y="42" width="8.500" height="27" rx="1.500" /><rect x="47" y="19" width="8.500" height="50" rx="1.500" /><rect x="59" y="32" width="8.500" height="37" rx="1.500" /></g></Tile> },
  { id: "preview", dot: true, art: <Tile fill="#efefef"><rect x="16" y="14" width="60" height="60" rx="12" fill="#9db9ec" /><path d="M16 46h60v16q0 12-12 12H28q-12 0-12-12z" fill="#274a72" /><path d="M16 56l12 3 10-2 10 8v9H28q-12 0-12-12z" fill="#c9d4dd" /><path d="M28 68l8-4 8 6v4H28z" fill="#6d5a44" /><rect x="46" y="43" width="33" height="14" rx="4" fill="#121212" /><path d="M49 57h27l5 21q-17 7-38 0z" fill="#cfd6da" stroke="#909a9f" /><path d="M54 62h16l2 12H52z" fill="#a9b6be" /></Tile> },
  { id: "word", dot: true, art: <Tile fill="#fff"><path d="M29 20h40v12H29z" fill="#5aa2ea" /><path d="M29 32h40v12H29z" fill="#3f7bd0" /><path d="M29 44h40v12H29z" fill="#2b5bb8" /><path d="M29 56h40v11H29z" fill="#1d3f8c" /><rect x="17" y="31" width="26" height="26" rx="3" fill="#2456b4" /><Glyph x={30} y={51} size={19} fill="#fff">W</Glyph></Tile> },
  { id: "photos", dot: true, art: <Tile fill="#fbfbfb">{["#f2952f", "#ead33c", "#9fce4e", "#5fb865", "#5ba5e6", "#8484d0", "#c573b8", "#e8564a"].map((c, i) => <rect key={c} x="37" y="13" width="18" height="29" rx="9" fill={c} opacity="0.820" transform={`rotate(${i * 45} 46 44)`} />)}</Tile> },
  { id: "terminal", dot: true, art: <><rect x="10.500" y="8.500" width="71" height="71" rx="17" fill="#b8c4ca" /><rect x="12.500" y="11" width="67" height="66" rx="15" fill="#050505" /><rect x="16" y="16" width="60" height="56" rx="11" fill="#262626" /><path d="M24 23l7 5-7 5M35 36h10" stroke="#fff" strokeWidth="2.600" fill="none" /></> },
  { id: "clock", dot: true, art: <><rect x="10.500" y="8.500" width="71" height="71" rx="17" fill="#1f2022" /><circle cx="46" cy="44" r="31" fill="#f4f4f4" />{["12", "1", "2", "3", "4", "5", "6", "7", "8", "9", "10", "11"].map((n, i) => <Glyph key={n} x={46 + 25 * Math.sin((i * Math.PI) / 6)} y={47 - 25 * Math.cos((i * Math.PI) / 6)} size={8.500} weight={600} fill="#222">{n}</Glyph>)}<path d="M21 32l25 12 9 14" stroke="#0a0a0a" strokeWidth="2.600" fill="none" strokeLinecap="round" /></> },
  { id: "teams", dot: true, art: <Tile fill="#fdfdfd"><circle cx="46.500" cy="27" r="7" fill="#7a80e2" /><circle cx="63" cy="30" r="5.500" fill="#5257c0" /><path d="M56 38h16v16q-2 8-10 7z" fill="#5257c0" /><path d="M34 38h26v17a13 13 0 0 1-26 0z" fill="#7a80e2" /><rect x="19" y="30" width="27" height="27" rx="3" fill="#4149b0" /><Glyph x={32.500} y={50} size={19} fill="#fff">T</Glyph></Tile> },
];

const extras: Art[] = [
  { id: "documents", art: <><path d="M25 3h28l4 8 12 25v47H20V8q5 0 5-5z" fill="#e4e4e4" /><path d="M20 12h29q7 12 20 20v51H20z" fill="#f3f3f3" /><path d="M51 4q2 10 0 28l20 1q-6-20-20-29z" fill="#fff" stroke="#d0d0d0" /></> },
  { id: "window", art: <><rect x="5" y="20" width="82" height="48" fill="#474859" /><rect x="5" y="20" width="82" height="4" fill="#5b3f8c" /><rect x="5" y="24" width="12" height="44" fill="#22222c" /><rect x="36" y="39" width="31" height="24" fill="#08080a" /><path d="M40 44h8M40 48h12M40 52h6M36 29h26M36 34h20" stroke="#8b8d9c" strokeWidth="1" /><rect x="59" y="57" width="26" height="26" rx="7" fill="#f5f5f5" /><ChromeMark cx={72} cy={70} r={11} /></> },
  { id: "trash", art: <><path d="M15 9l62 0-8 65q-2 8-23 9-21-1-23-9z" fill="url(#bin)" /><ellipse cx="46" cy="10" rx="31" ry="7" fill="#53575a" stroke="#9a9ea1" strokeWidth="1.500" /><path d="M24 8l8-6 6 5 6-7 7 6 8-5 6 9-5 7-9-3-8 4-10-3-6 3z" fill="#e8e8e6" /><path d="M34 6l6 5M52 5l-3 8M60 7l3 5M42 10l4 4" stroke="#77706a" strokeWidth="2" /><path d="M54 8l4 4" stroke="#3a78b8" strokeWidth="3" /></> },
];

function DockItem({ item, cell = "w-[91.84px]" }: { item: Art; cell?: string }) {
  return (
    <div className={`flex h-full shrink-0 flex-col items-center pt-[6px] ${cell}`}>
      <svg className="h-[88px] w-[92px] shrink-0 overflow-visible" viewBox="0 0 92 88">{item.art}</svg>
      {item.dot && <div className="mt-[2px] size-2 rounded-full bg-[#c39aae]" />}
    </div>
  );
}

function Dock() {
  return (
    <div className="mx-auto mt-[10px] flex h-[110px] w-[3308px] shrink-0 items-start rounded-[34px] border-2 border-white/20 bg-[linear-gradient(90deg,#1b1d24_0%,#1c1e25_14%,#351824_21%,#41182a_29%,#431a22_36%,#4c1c1c_41%,#42162a_48%,#3d1622_54%,#45183a_69%,#47182c_78%,#3c1a26_82%,#501e1c_90%,#6a2416_100%)] pl-1">
      <svg className="absolute size-0">
        <defs>
          <linearGradient id="finder" x2="0" y2="1"><stop stopColor="#5bc8fa" /><stop offset="1" stopColor="#3468ee" /></linearGradient>
          <linearGradient id="safari" x2="0" y2="1"><stop stopColor="#4fa6ee" /><stop offset="1" stopColor="#2f6be0" /></linearGradient>
          <linearGradient id="fox" x2="0" y2="1"><stop stopColor="#ffc83c" /><stop offset="0.500" stopColor="#f9683a" /><stop offset="1" stopColor="#d52a78" /></linearGradient>
          <linearGradient id="green" x2="0" y2="1"><stop stopColor="#86ef7e" /><stop offset="1" stopColor="#55bf42" /></linearGradient>
          <linearGradient id="silver" x2="0" y2="1"><stop stopColor="#fff" /><stop offset="1" stopColor="#c4e2be" /></linearGradient>
          <linearGradient id="tan" x2="0" y2="1"><stop stopColor="#b8935c" /><stop offset="1" stopColor="#94703f" /></linearGradient>
          <linearGradient id="store" x2="0" y2="1"><stop stopColor="#4fb2f0" /><stop offset="1" stopColor="#2656d6" /></linearGradient>
          <linearGradient id="grey" x2="0" y2="1"><stop stopColor="#d5dfe8" /><stop offset="1" stopColor="#86837f" /></linearGradient>
          <linearGradient id="zoomb" x1="1" x2="0" y2="1"><stop stopColor="#3579e8" /><stop offset="0.400" stopColor="#2458f0" /><stop offset="1" stopColor="#1c44b8" /></linearGradient>
          <linearGradient id="bin"><stop stopColor="#6f7477" /><stop offset="0.400" stopColor="#8d9294" /><stop offset="1" stopColor="#4c5052" /></linearGradient>
        </defs>
      </svg>
      {appsLeft.map((a) => <DockItem key={a.id} item={a} />)}
      <div className="ml-[20px] mt-[12px] h-[82px] w-0.5 bg-[#86606f]" />
      <div className="ml-[18px] flex h-full">{appsRight.map((a) => <DockItem key={a.id} item={a} cell="w-[92px]" />)}</div>
      <div className="ml-[20px] mt-[12px] h-[82px] w-0.5 bg-[#94645c]" />
      <div className="ml-[18px] flex h-full">{extras.map((a) => <DockItem key={a.id} item={a} cell="w-[92px]" />)}</div>
    </div>
  );
}

export default function App() {
  return (
    <div className="flex h-[2234px] w-[3456px] flex-col overflow-hidden bg-[linear-gradient(90deg,#04101a_0%,#04101a_21.500%,#2b0220_22%,#3d1038_34%,#33101a_34.500%,#3c0c18_44%,#2e0420_50%,#34021e_55%,#2a041e_60%,#4a1640_71%,#2c0628_72%,#3a0c34_80%,#4a1020_86%,#7a2814_96%,#852c16_100%)] [font-family:Inter,sans-serif]">
      <MenuBar />
      <div className="mt-[2px] h-[2030px] shrink-0 rounded-[20px] border-t-2 border-[#5e5a9a] bg-[#4c4f52] pt-[2px] shadow-[0_6px_20px_10px_rgba(0,0,0,0.8)]">
        <BrowserWindow />
      </div>
      <Dock />
    </div>
  );
}
